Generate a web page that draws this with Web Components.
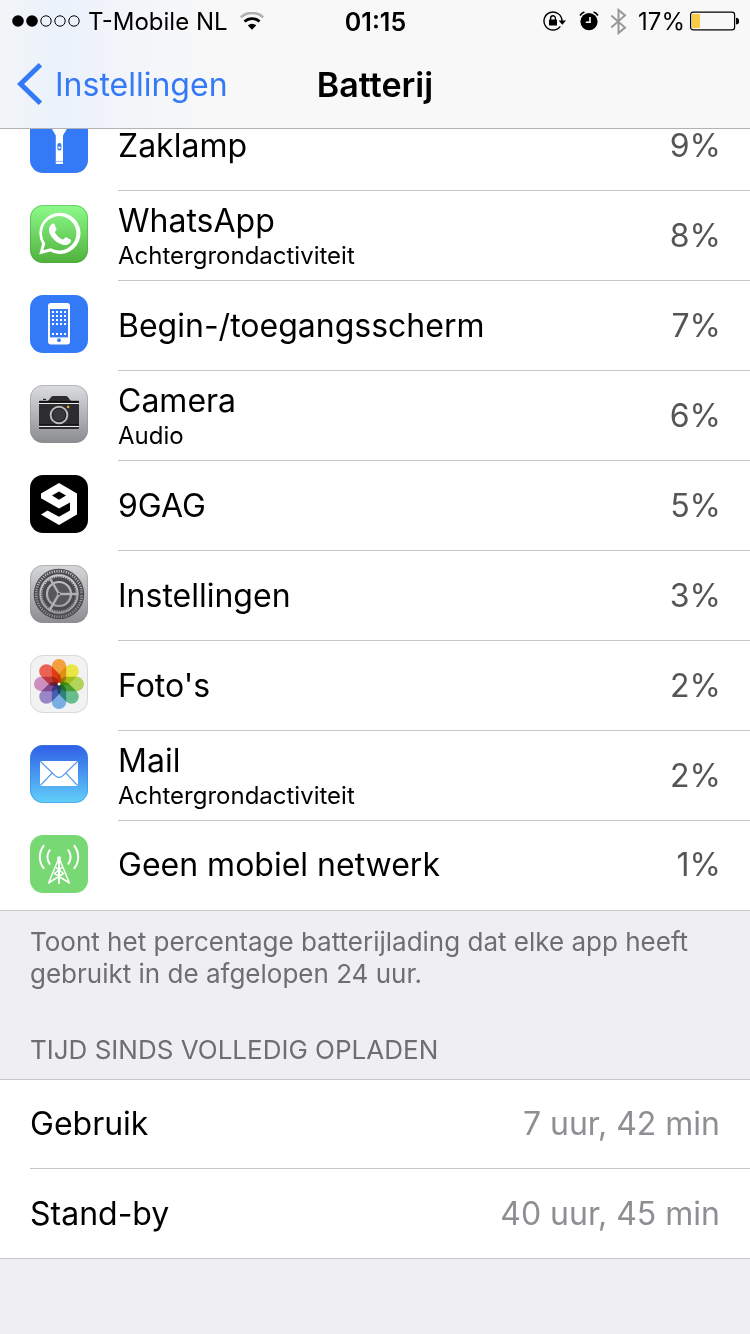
<!DOCTYPE html>
<html lang="nl">
<head>
<meta charset="utf-8">
<meta name="viewport" content="width=device-width, initial-scale=1">
<title>Batterij</title>
<style>
  html { background: #efeef3; }
  body { margin: 0; font-family: Inter, "Liberation Sans", sans-serif; color: #000; }
</style>
</head>
<body>
<battery-page></battery-page>

<template id="t-status-bar">
  <style>
    :host { display: grid; grid-template-columns: 1fr auto 1fr; align-items: center; height: 40px; padding: 0 11px 0 12px; font-size: 24px; line-height: 40px; }
    .left, .right { display: flex; align-items: center; white-space: nowrap; }
    .right { justify-content: flex-end; }
    .time { font-size: 25px; font-weight: 600; }
    span { padding-top: 2px; }
    svg { display: block; flex: none; }
    .carrier { margin: 0 12px 0 8px; }
    .lock { margin-right: 12px; }
    .alarm { margin-right: 11px; }
    .bt { margin-right: 11px; }
    .pct { margin-right: 5px; }
  </style>
  <div class="left">
    <svg width="68" height="14" viewBox="0 0 68 14" aria-hidden="true">
      <circle cx="6" cy="7" r="5.8"/><circle cx="20" cy="7" r="5.8"/>
      <g fill="none" stroke="#000" stroke-width="1"><circle cx="34" cy="7" r="5.2"/><circle cx="48" cy="7" r="5.2"/><circle cx="62" cy="7" r="5.2"/></g>
    </svg>
    <span class="carrier"><slot name="carrier"></slot></span>
    <svg width="24" height="18" viewBox="0 0 24 18" fill="none" aria-hidden="true">
      <path d="M.8 5.4a16 16 0 0 1 22.4 0" stroke="#b0b0b0" stroke-width="2.6"/>
      <path d="M4.5 9.6a10.8 10.8 0 0 1 15 0" stroke="#000" stroke-width="2.8"/>
      <path d="M7.8 13.4a6 6 0 0 1 8.4 0L12 17.8z" fill="#000"/>
    </svg>
  </div>
  <span class="time"><slot name="time"></slot></span>
  <div class="right">
    <svg class="lock" width="24" height="20" viewBox="0 0 24 20" fill="none" aria-hidden="true">
      <path d="M17.3 15.3A9 9 0 1 1 19 10" stroke="#000" stroke-width="1.4"/>
      <path d="M15.6 9.4h7.4l-3.7 4.4z" fill="#000"/>
      <rect x="6" y="8.6" width="8" height="6" rx=".6" fill="#000"/>
      <path d="M7.6 9V7.2a2.4 2.4 0 0 1 4.8 0V9" stroke="#000" stroke-width="1.4"/>
    </svg>
    <svg class="alarm" width="20" height="20" viewBox="0 0 20 20" fill="none" aria-hidden="true">
      <circle cx="10" cy="10.6" r="8.6" fill="#000"/>
      <path d="M1 4.6A10 10 0 0 1 5.4 1M14.6 1A10 10 0 0 1 19 4.6" stroke="#000" stroke-width="1.7"/>
      <path d="M11 6v5.3H6.8" stroke="#fff" stroke-width="1.6"/>
    </svg>
    <svg class="bt" width="17" height="27" viewBox="0 0 17 27" fill="none" stroke="#989898" stroke-width="2" aria-hidden="true">
      <path d="M1.3 7.4L15 19.6L8.5 25V2L15 7.4L1.3 19.6"/>
    </svg>
    <span class="pct"><slot name="charge"></slot></span>
    <svg width="49" height="20" viewBox="0 0 49 20" aria-hidden="true">
      <rect x=".6" y="1.1" width="44" height="17.8" rx="2.6" fill="none" stroke="#000" stroke-width="1.2"/>
      <rect x="2" y="3" width="8" height="14" fill="#f7cb46"/>
      <path d="M46 6.8a3.3 3.3 0 0 1 0 6.6z"/>
    </svg>
  </div>
</template>

<template id="t-nav-bar">
  <style>
    :host { display: grid; grid-template-columns: 1fr auto 1fr; align-items: center; height: 88px; padding: 0 17px; font-size: 32px; }
    a { display: flex; align-items: center; gap: 12px; color: #347af6; text-decoration: none; }
    svg { display: block; flex: none; }
    h1 { margin: 0; font-size: 34px; font-weight: 600; }
  </style>
  <a href="#instellingen">
    <svg width="26" height="42" viewBox="0 0 26 42" fill="none" stroke="#347af6" stroke-width="5" aria-hidden="true"><path d="M23.4 1.8L3.600 21L23.4 40.2"/></svg>
    <span><slot name="back"></slot></span>
  </a>
  <h1><slot></slot></h1>
</template>

<template id="t-usage-row">
  <style>
    :host { display: flex; gap: 30px; padding-left: 30px; height: 90px; }
    app-icon { margin-top: 14px; }
    .body { flex: 1; display: flex; align-items: center; justify-content: space-between; padding-right: 29px; border-bottom: 1px solid #c8c7cc; font-size: 32px; line-height: 40px; }
    :host([last]) .body { border-bottom-color: transparent; }
    ::slotted([slot="note"]) { display: block; font-size: 24px; line-height: 30px; }
    .value { color: #555; }
  </style>
  <app-icon></app-icon>
  <div class="body">
    <div class="label"><div class="title"><slot></slot></div><slot name="note"></slot></div>
    <span class="value"><slot name="value"></slot></span>
  </div>
</template>

<template id="t-detail-row">
  <style>
    :host { display: block; padding-left: 30px; }
    .body { display: flex; align-items: center; justify-content: space-between; height: 88px; padding-right: 30px; border-bottom: 1px solid #c8c7cc; font-size: 32px; line-height: 40px; }
    :host([last]) .body { border-bottom: 0; height: 89px; }
    .value { color: #8e8e93; }
  </style>
  <div class="body"><span><slot></slot></span><span class="value"><slot name="value"></slot></span></div>
</template>

<template id="t-battery-page">
  <style>
    :host { display: block; }
    header { position: sticky; top: 0; z-index: 1; border-bottom: 1px solid #b2b2b2; background: linear-gradient(90deg, #f2f5f8 0, #ebf2fb 60px, #f3f5f9 130px, #f8f8f8 220px, #f8f8f8 100%); }
    .usage { margin-top: -28px; background: #fff; border-bottom: 1px solid #c8c7cc; }
    .usage usage-row:last-child { height: 89px; }
    .footnote { margin: 0; padding: 15px 30px 0; color: #6d6d72; font-size: 26px; line-height: 32px; }
    h2 { margin: 0; padding: 44px 30px 13px; color: #6d6d72; font-size: 26px; line-height: 32px; font-weight: 400; }
    .times { background: #fff; border-top: 1px solid #c8c7cc; border-bottom: 1px solid #c8c7cc; }
  </style>
  <header>
    <status-bar><span slot="carrier">T-Mobile NL</span><span slot="time">01:15</span><span slot="charge">17%</span></status-bar>
    <nav-bar><span slot="back">Instellingen</span>Batterij</nav-bar>
  </header>
  <main>
    <section class="usage">
      <usage-row icon="torch">Zaklamp<span slot="value">9%</span></usage-row>
      <usage-row icon="whatsapp">WhatsApp<span slot="note">Achtergrondactiviteit</span><span slot="value">8%</span></usage-row>
      <usage-row icon="home">Begin-/toegangsscherm<span slot="value">7%</span></usage-row>
      <usage-row icon="camera">Camera<span slot="note">Audio</span><span slot="value">6%</span></usage-row>
      <usage-row icon="ninegag">9GAG<span slot="value">5%</span></usage-row>
      <usage-row icon="settings">Instellingen<span slot="value">3%</span></usage-row>
      <usage-row icon="photos">Foto's<span slot="value">2%</span></usage-row>
      <usage-row icon="mail">Mail<span slot="note">Achtergrondactiviteit</span><span slot="value">2%</span></usage-row>
      <usage-row icon="network" last>Geen mobiel netwerk<span slot="value">1%</span></usage-row>
    </section>
    <p class="footnote">Toont het percentage batterijlading dat elke app heeft gebruikt in de afgelopen 24 uur.</p>
    <h2>TIJD SINDS VOLLEDIG OPLADEN</h2>
    <section class="times">
      <detail-row>Gebruik<span slot="value">7 uur, 42 min</span></detail-row>
      <detail-row last>Stand-by<span slot="value">40 uur, 45 min</span></detail-row>
    </section>
  </main>
</template>

<script>
  const gradient = (id, from, to) =>
    `<linearGradient id="${id}" gradientUnits="userSpaceOnUse" x1="0" y1="0" x2="0" y2="58"><stop offset="0" stop-color="${from}"/><stop offset="1" stop-color="${to}"/></linearGradient>`;

  const homeDots = () => {
    let d = '';
    for (const y of [16, 20, 24, 28, 38]) for (const x of [22, 26, 30, 34]) d += `M${x} ${y}h2v2h-2z`;
    return d;
  };

  const petals = () => ['#f2a040', '#ebe445', '#b2d45a', '#68bd8e', '#78aee4', '#9a86c6', '#cd8fbe', '#ea6352']
    .map((c, i) => `<rect x="21.8" y="4" width="14.4" height="25" rx="7.2" fill="${c}" transform="rotate(${i * 45} 29 29)" style="mix-blend-mode:multiply"/>`)
    .join('');

  const spokes = [0, 120, 240]
    .map(a => `<path d="M29 29L48 29" transform="rotate(${a} 29 29)"/>`).join('');

  // Each app tile is drawn on a 58 x 58 grid.
  const ICONS = {
    torch: { fill: '#347af6', art: `
      <path d="M22 8h14.800v6L33 20.500V49h-7.200V20.500L22 14z" fill="#fff"/>
      <path d="M25.8 46.400h7.200" stroke="#8bb4fa"/>
      <rect x="27.400" y="28" width="4" height="7.400" rx="2" fill="#347af6"/><circle cx="29.400" cy="32.600" r="1.200" fill="#fff"/>` },
    whatsapp: { defs: gradient('g', '#8dfb8b', '#50b13c'), fill: 'url(#g)', edge: '#46a63a', art: `
      <path d="M9.2 49.4l2.9-10.7A20.6 20.6 0 1 1 20.2 46.500z" fill="#fff"/>
      <path d="M13.400 45.200l1.900-6.700A17.200 17.200 0 1 1 20.700 43.300z" fill="url(#g)"/>
      <path d="M21.300 19.600c1.200-1.300 2.700-1.300 3.300-.1l1.900 4.400c.4 1.100-2 2.800-1.600 3.600 2 3.500 4.300 5.500 7.800 7 1 .3 2.300-2.700 3.400-2.300l4.400 2.200c.9.500.4 2.600-.5 3.600-1.800 2-4.700 2.600-8 1.400-6.300-2.200-10.400-6.300-12.500-11.400-1.200-3.400-.3-6.400 1.800-8.400z" fill="#fff"/>` },
    home: { fill: '#347af6', art: `
      <rect x="18" y="8" width="22" height="41.500" rx="3" fill="#fff"/><rect x="20" y="14" width="18" height="28.400" fill="#347af6"/>
      <path d="${homeDots()}" fill="#fff"/><circle cx="29" cy="45.200" r="1.900" fill="#347af6"/>` },
    camera: { defs: gradient('g', '#dcdde0', '#8b8c90'), fill: 'url(#g)', edge: '#8f8f92', art: `
      <path d="M9 17c0-1 .5-1.200 1.500-1.200h7c2 0 3-4.800 5.500-4.800h13c2.500 0 3.500 4.800 5.500 4.800H48c.7 0 1 .3 1 1.200v26c0 .7-.3 1-1 1H10c-.7 0-1-.3-1-1z" fill="#2d2d2f"/>
      <path d="M9 18.500h40M9 41.500h40" stroke="#ececec"/><path d="M9 16.900h40" stroke="#000"/><path d="M9 39.800h40" stroke="#111"/>
      <path d="M13 14.400h3" stroke="#222" stroke-width="1.200"/>
      <rect x="37" y="20.800" width="2.300" height="2.300" fill="#e3ad32"/>
      <circle cx="29" cy="30" r="8.300" fill="#38383a" stroke="#b9babc" stroke-width="2"/><circle cx="29" cy="30" r="6.700" fill="none" stroke="#222"/>` },
    ninegag: { fill: '#000', art: `
      <path fill-rule="evenodd" fill="#fff" d="M29 8L47 18.500V39.500L29 50L11 39.500L17.500 35.500L29 41.700L40 35.500V27.400L29 33.500L11 23.300V18.500zM29 16.600L22 20.600L29 24.700L36 20.600z"/>` },
    settings: { defs: gradient('g', '#d6d7d9', '#8c8d91'), fill: 'url(#g)', edge: '#909093', art: `
      <g fill="none" stroke="#4b4b4d">
        <circle cx="29" cy="29" r="24.700" stroke-width="1.100"/>
        <circle cx="29" cy="29" r="23" stroke-width="3" stroke-dasharray="1.420 .989"/>
        <circle cx="29" cy="29" r="20.700" stroke-width="2"/>
        <circle cx="29" cy="29" r="14.900" stroke-width="3.600"/>
        <circle cx="29" cy="29" r="17.200" stroke-width="1.200" stroke-dasharray="1.200 1.052"/>
      </g>
      <circle cx="29" cy="29" r="10.900" fill="#58585a"/>
      <g stroke="#b2b3b5" stroke-width="2.400">${spokes}</g>
      <circle cx="29" cy="29" r="1.700" fill="#58585a" stroke="#adaeb0"/>` },
    photos: { fill: '#f2f2f2', edge: '#bfbfbf', art: `<g style="isolation:isolate">${petals()}</g><circle cx="29" cy="29" r="1.500" fill="#fff"/>` },
    mail: { defs: gradient('g', '#2f5ee6', '#62d0fa'), fill: 'url(#g)', edge: '#3a86dc', art: `
      <rect x="10" y="16" width="38" height="25" fill="#fff"/>
      <path d="M10.300 16.300L25 30.600c2.700 2.500 5.300 2.500 8 0L47.700 16.300M10.300 40.700L22 28.200M47.700 40.700L36 28.200" fill="none" stroke="#4794ef" stroke-width="1.200"/>` },
    network: { fill: '#78d873', art: `
      <g fill="none" stroke="#fff" stroke-width="1.500" stroke-linecap="round" stroke-linejoin="round">
        <path d="M28.500 24L18.600 48L33.500 38.500M29.500 24L39.400 48L24.500 38.500M26 32.500L33.500 38.500M32 32.500L24.500 38.500"/><path d="M29 24v24" stroke-width="2"/>
        <path d="M19.600 15.200a12.500 12.500 0 0 0 0 13.600M38.400 15.200a12.500 12.500 0 0 1 0 13.600M13.600 10.800a18.500 18.500 0 0 0 0 22.400M44.400 10.800a18.500 18.500 0 0 1 0 22.400" stroke-width="2"/>
      </g><circle cx="29" cy="23.300" r="2" fill="#fff"/>` }
  };

  class TemplateElement extends HTMLElement {
    constructor() {
      super();
      const source = document.getElementById('t-' + this.localName);
      this.attachShadow({ mode: 'open' }).append(source.content.cloneNode(true));
    }
  }

  class AppIcon extends HTMLElement {
    static observedAttributes = ['name'];
    constructor() { super(); this.attachShadow({ mode: 'open' }); }
    attributeChangedCallback() {
      const icon = ICONS[this.getAttribute('name')];
      if (!icon) return;
      const edge = icon.edge ? `<rect x=".5" y=".5" width="57" height="57" rx="12.500" fill="none" stroke="${icon.edge}" stroke-opacity=".5"/>` : '';
      this.shadowRoot.innerHTML = `<style>:host{display:block;flex:none;width:58px;height:58px}svg{display:block}</style>
        <svg width="58" height="58" viewBox="0 0 58 58" aria-hidden="true"><defs>${icon.defs || ''}</defs>
        <rect width="58" height="58" rx="13" fill="${icon.fill}"/>${edge}${icon.art}</svg>`;
    }
  }

  class UsageRow extends TemplateElement {
    connectedCallback() {
      this.shadowRoot.querySelector('app-icon').setAttribute('name', this.getAttribute('icon'));
    }
  }

  customElements.define('app-icon', AppIcon);
  customElements.define('status-bar', class extends TemplateElement {});
  customElements.define('nav-bar', class extends TemplateElement {});
  customElements.define('usage-row', UsageRow);
  customElements.define('detail-row', class extends TemplateElement {});
  customElements.define('battery-page', class extends TemplateElement {});
</script>
</body>
</html>
